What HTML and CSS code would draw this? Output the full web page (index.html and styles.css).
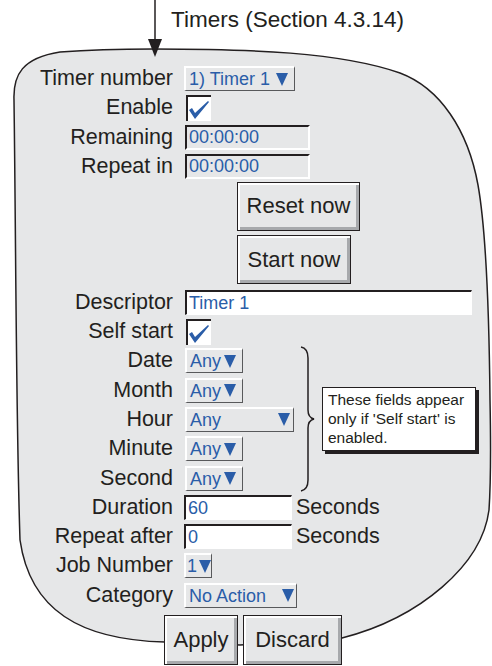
FILE: index.html
```html
<!DOCTYPE html>
<html lang="en">
<head>
<meta charset="UTF-8">
<title>Timers</title>
<link rel="stylesheet" href="styles.css">
</head>
<body>

<div class="page">
  <!-- outline of the screen and the pointer arrow -->
  <svg class="frame" width="492" height="666" viewBox="0 0 492 666">
    <path class="shape" d="M60 52 C100 49 130 49 153 49 C250 49 340 52 400 73 C440 88 468 130 478 185 C486 230 489 300 490 400 C491 450 491 480 489 510 C482 565 420 618 342 638 L240 645 L165 642 C80 640 30 610 20 540 C16 420 16 250 14 100 C13 75 22 58 60 52 Z"/>
    <line class="pointer" x1="155" y1="0" x2="155" y2="42"/>
    <polygon class="pointer-head" points="148,39 162,39 155,57"/>
  </svg>

  <h1 class="title">Timers (Section 4.3.14)</h1>

  <div class="form">
    <div class="row">
      <span class="label">Timer number</span>
      <span class="select w-timer">1) Timer 1<span class="caret"></span></span>
    </div>
    <div class="row">
      <span class="label">Enable</span>
      <span class="check"><svg width="22" height="22" viewBox="0 0 22 22"><polygon points="1,12 4,10 7,15 20,3 21,4 7,21"/></svg></span>
    </div>
    <div class="row">
      <span class="label">Remaining</span>
      <span class="value">00:00:00</span>
    </div>
    <div class="row">
      <span class="label">Repeat in</span>
      <span class="value">00:00:00</span>
    </div>
    <div class="row row-btn">
      <button class="btn btn-reset">Reset now</button>
    </div>
    <div class="row row-btn">
      <button class="btn btn-start">Start now</button>
    </div>
    <div class="row">
      <span class="label">Descriptor</span>
      <span class="input w-desc">Timer 1</span>
    </div>
    <div class="row">
      <span class="label">Self start</span>
      <span class="check"><svg width="22" height="22" viewBox="0 0 22 22"><polygon points="1,12 4,10 7,15 20,3 21,4 7,21"/></svg></span>
    </div>

    <div class="group">
      <div class="group-rows">
        <div class="row">
          <span class="label">Date</span>
          <span class="select w-any">Any<span class="caret"></span></span>
        </div>
        <div class="row">
          <span class="label">Month</span>
          <span class="select w-any">Any<span class="caret"></span></span>
        </div>
        <div class="row">
          <span class="label">Hour</span>
          <span class="select w-hour">Any<span class="caret"></span></span>
        </div>
        <div class="row">
          <span class="label">Minute</span>
          <span class="select w-any">Any<span class="caret"></span></span>
        </div>
        <div class="row">
          <span class="label">Second</span>
          <span class="select w-any">Any<span class="caret"></span></span>
        </div>
      </div>
      <svg class="brace" width="18" height="146" viewBox="0 0 18 146">
        <path d="M2 1 C7 2 9 5 9 12 L9 64 C9 69 11 72 15 73 C11 74 9 77 9 82 L9 134 C9 141 7 144 2 145"/>
      </svg>
      <div class="note">These fields appear<br>only if 'Self start' is<br>enabled.</div>
    </div>

    <div class="row">
      <span class="label">Duration</span>
      <span class="input w-num">60</span>
      <span class="unit">Seconds</span>
    </div>
    <div class="row">
      <span class="label">Repeat after</span>
      <span class="input w-num">0</span>
      <span class="unit">Seconds</span>
    </div>
    <div class="row">
      <span class="label">Job Number</span>
      <span class="select w-job">1<span class="caret"></span></span>
    </div>
    <div class="row">
      <span class="label">Category</span>
      <span class="select w-cat">No Action<span class="caret"></span></span>
    </div>

    <div class="actions">
      <button class="btn btn-apply">Apply</button>
      <button class="btn btn-discard">Discard</button>
    </div>
  </div>
</div>

</body>
</html>
```

FILE: styles.css
```css
body {
  margin: 0;
  background: #ffffff;
}

.page {
  position: relative;
  width: 492px;
  height: 666px;
  overflow: hidden;
  font-family: "Liberation Sans", Arial, sans-serif;
  color: #231f20;
}

.frame {
  position: absolute;
  left: 0;
  top: 0;
}

.shape {
  fill: #e6e7e8;
  stroke: #231f20;
  stroke-width: 1.5;
}

.pointer {
  stroke: #231f20;
  stroke-width: 1.5;
}

.pointer-head {
  fill: #231f20;
}

.title,
.form {
  position: relative;
}

.title {
  margin: 0;
  padding: 7px 0 0 171px;
  font-size: 22.5px;
  font-weight: normal;
  line-height: 26px;
}

.form {
  margin-top: 33px;
  display: flex;
  flex-direction: column;
  gap: 4.3px;
}

.row {
  display: flex;
  align-items: center;
  height: 25px;
}

.label {
  width: 173px;
  margin-right: 11px;
  text-align: right;
  font-size: 21.5px;
  line-height: 25px;
  white-space: nowrap;
}

/* drop-down fields */
.select {
  box-sizing: border-box;
  display: flex;
  align-items: center;
  height: 25px;
  padding-left: 3px;
  border-style: solid;
  border-width: 2px 1px 1px 2px;
  border-color: #ffffff #58595b #58595b #ffffff;
  background: #e6e7e8;
  color: #2a5da8;
  font-size: 18px;
  line-height: 22px;
  white-space: nowrap;
}

.caret {
  margin-left: auto;
  width: 0;
  height: 0;
  border-left: 6px solid transparent;
  border-right: 6px solid transparent;
  border-top: 13px solid #2a5da8;
}

.w-timer { width: 111px; padding-right: 6px; }
.w-any { width: 58px; padding-right: 6px; margin-left: 1px; }
.w-hour { width: 109px; padding-right: 3px; margin-left: 1px; }
.w-job { width: 28px; padding-left: 1px; padding-right: 0; }
.w-cat { width: 113px; padding-right: 2px; }

/* check boxes */
.check {
  box-sizing: border-box;
  width: 25px;
  height: 26px;
  margin-left: 2px;
  padding: 1px 0 0 0;
  border-style: solid;
  border-width: 2px 0 0 2px;
  border-color: #231f20;
  background: #ffffff;
}

.check svg {
  display: block;
  fill: #2a5da8;
}

/* read only values */
.value {
  box-sizing: border-box;
  width: 125px;
  height: 25px;
  margin-left: 1px;
  padding-left: 2px;
  border-style: solid;
  border-width: 2px;
  border-color: #231f20 #ffffff #ffffff #231f20;
  background: #e6e7e8;
  color: #2a5da8;
  font-size: 18px;
  line-height: 21px;
}

/* text entry */
.input {
  box-sizing: border-box;
  height: 25px;
  padding-left: 2px;
  border-style: solid;
  border-width: 2px 1px 1px 2px;
  border-color: #231f20 #ffffff #ffffff #231f20;
  background: #ffffff;
  color: #2a5da8;
  font-size: 18px;
  line-height: 22px;
}

.w-desc { width: 287px; margin-left: 1px; }
.w-num { width: 108px; }

.unit {
  margin-left: 4px;
  font-size: 21.5px;
  line-height: 25px;
}

/* buttons */
.btn {
  box-sizing: border-box;
  display: flex;
  align-items: center;
  justify-content: center;
  padding: 0;
  border: 1px solid #231f20;
  background: #e6e7e8;
  box-shadow: inset 2px 2px 0 #ffffff, inset -3px -3px 0 #a7a9ac;
  font-family: "Liberation Sans", Arial, sans-serif;
  font-size: 22px;
  color: #231f20;
  cursor: pointer;
}

.row-btn {
  height: 49px;
  padding-left: 237px;
}

.btn-reset { width: 123px; height: 49px; margin-top: -3px; }
.btn-start { width: 114px; height: 49px; margin-top: -2px; }

.actions {
  display: flex;
  gap: 5px;
  margin-top: 3px;
  padding-left: 164px;
}

.btn-apply { width: 74px; height: 50px; }
.btn-discard { width: 99px; height: 50px; }

/* self start group with its note */
.group {
  display: flex;
  align-items: center;
}

.group-rows {
  display: flex;
  flex-direction: column;
  gap: 4.3px;
  width: 296px;
}

.brace {
  margin: -2px 0 -2px 3px;
}

.brace path {
  fill: none;
  stroke: #231f20;
  stroke-width: 1.5;
}

.note {
  box-sizing: border-box;
  width: 154px;
  margin-left: 5px;
  padding: 2px 4px 3px 5px;
  border: 1px solid #231f20;
  box-shadow: 3px 3px 0 #231f20;
  background: #ffffff;
  font-size: 15.5px;
  line-height: 19px;
}
```
